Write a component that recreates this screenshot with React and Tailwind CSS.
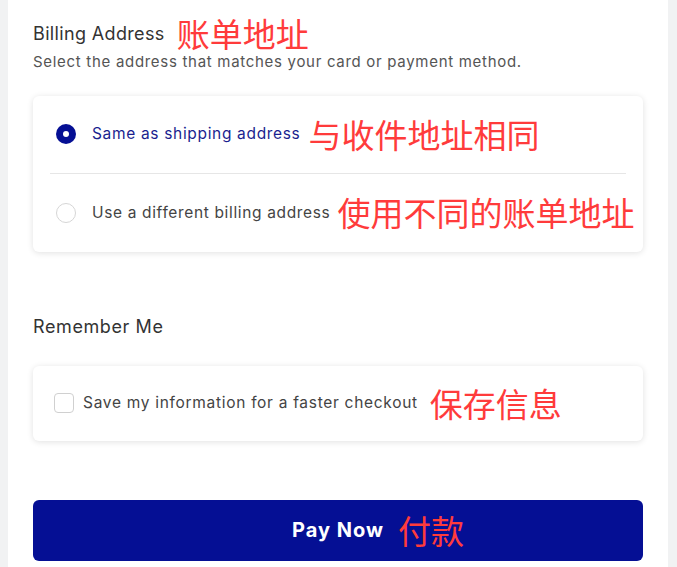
import React, { useState } from 'react';

const cn = "font-['Noto_Sans_CJK_SC',sans-serif] text-[#ff3b3b] font-normal text-[33px] leading-none tracking-normal whitespace-nowrap shrink-0";

const App = () => {
  const [billing, setBilling] = useState('same');
  const [remember, setRemember] = useState(false);

  return (
    <div className="min-h-[567px] bg-[#f1f2f3] flex font-['Inter',sans-serif]">
      <div className="ml-[8px] w-[660px] bg-white px-[25px] pt-[15px] pb-[6px]">
        {/* Billing */}
        <div className="flex items-center h-[36px]">
          <h2 className="text-[18px] text-[#333] tracking-[0.35px]">Billing Address</h2>
          <span className={`${cn} ml-[12px]`}>账单地址</span>
        </div>
        <p className="text-[15px] text-[#555] tracking-[0.7px]">Select the address that matches your card or payment method.</p>

        <div className="mt-[22px] rounded-[6px] bg-white shadow-[0_1px_6px_rgba(0,0,0,0.12)] px-[17px]">
          <label className="flex items-center h-[77px] cursor-pointer whitespace-nowrap" onClick={() => setBilling('same')}>
            <span className={`shrink-0 ml-[6px] w-[20px] h-[20px] rounded-full flex items-center justify-center ${billing === 'same' ? 'bg-[#050f94]' : 'border border-[#d6d6d6]'}`}>
              {billing === 'same' && <span className="w-[6px] h-[6px] rounded-full bg-white" />}
            </span>
            <span className={`shrink-0 ml-[16px] text-[15.5px] tracking-[0.67px] ${billing === 'same' ? 'text-[#1a1f8f]' : 'text-[#444]'}`}>Same as shipping address</span>
            <span className={`${cn} ml-[8px]`}>与收件地址相同</span>
          </label>
          <div className="h-px bg-[#e6e6e6]" />
          <label className="flex items-center h-[78px] cursor-pointer whitespace-nowrap" onClick={() => setBilling('diff')}>
            <span className={`shrink-0 ml-[6px] w-[20px] h-[20px] rounded-full flex items-center justify-center ${billing === 'diff' ? 'bg-[#050f94]' : 'border border-[#d6d6d6]'}`}>
              {billing === 'diff' && <span className="w-[6px] h-[6px] rounded-full bg-white" />}
            </span>
            <span className={`shrink-0 ml-[16px] text-[15.5px] tracking-[0.65px] ${billing === 'diff' ? 'text-[#1a1f8f]' : 'text-[#444]'}`}>Use a different billing address</span>
            <span className={`${cn} ml-[7px]`}>使用不同的账单地址</span>
          </label>
        </div>

        {/* Remember */}
        <h2 className="mt-[61px] text-[18px] text-[#333] leading-[28px] tracking-[0.6px]">Remember Me</h2>

        <div className="mt-[25px] rounded-[6px] bg-white shadow-[0_1px_6px_rgba(0,0,0,0.12)] h-[75px] flex items-center px-[21px] whitespace-nowrap">
          <span
            className={`shrink-0 w-[20px] h-[20px] rounded-[4px] ${remember ? 'bg-[#050f94]' : 'border border-[#d0d0d0]'}`}
            onClick={() => setRemember(!remember)}
          />
          <span className="ml-[9px] text-[15.5px] text-[#444] tracking-[0.7px]">Save my information for a faster checkout</span>
          <span className={`${cn} ml-[12px]`}>保存信息</span>
        </div>

        <button className="mt-[59px] w-full h-[61px] rounded-[6px] bg-[#050f94] flex items-center justify-center">
          <span className="relative text-white font-bold text-[20px] tracking-[1px]">
            Pay Now
            <span className={`${cn} absolute left-full top-1/2 -translate-y-1/2 ml-[14px]`}>付款</span>
          </span>
        </button>
      </div>
    </div>
  );
};

export default App;
